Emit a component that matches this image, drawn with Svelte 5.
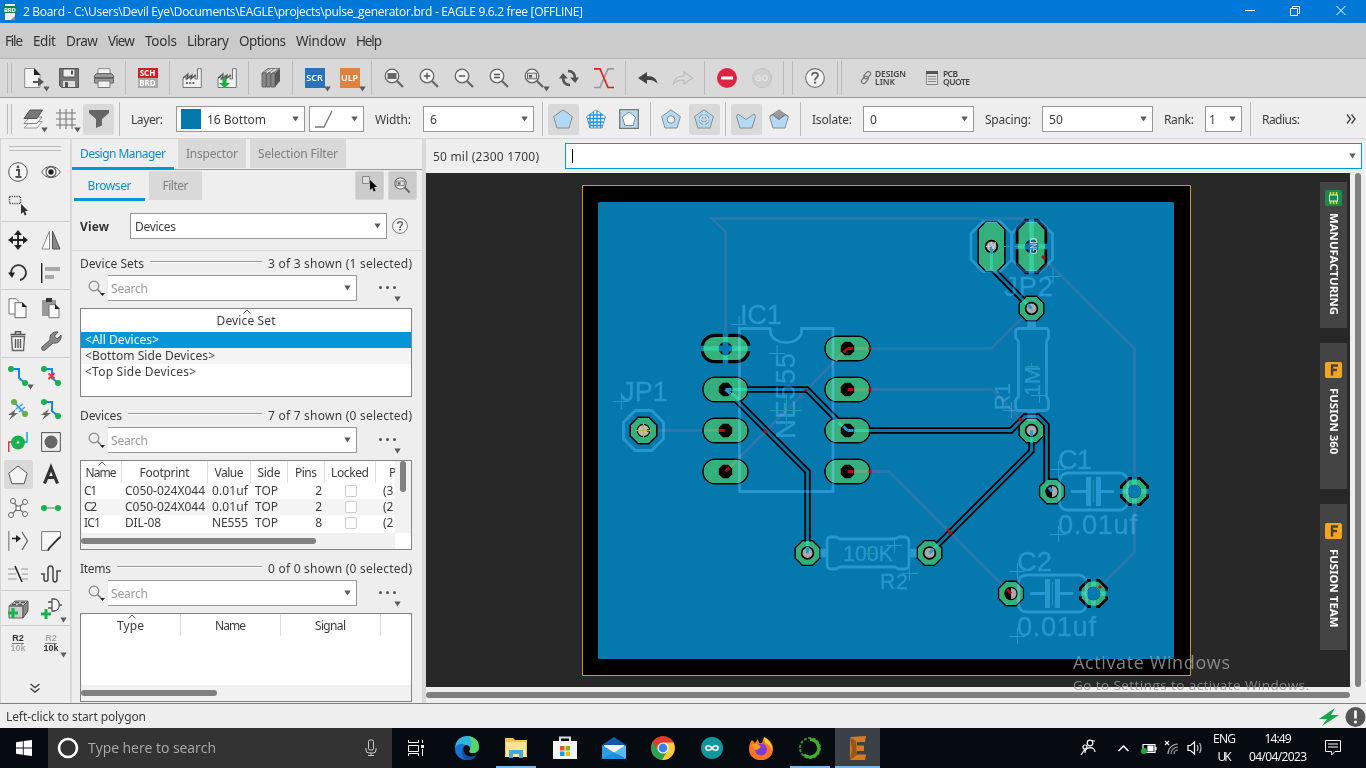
<script>
  // Spreads a label's letters so that it fills the given pixel width.
  function fit(node, width) {
    const natural = node.getBoundingClientRect().width;
    const gap = (width - natural) / Math.max(1, node.textContent.length - 1);
    node.style.letterSpacing = gap + 'px';
    node.style.marginRight = -gap + 'px';
  }

  const menus = [['File', 18], ['Edit', 23], ['Draw', 32], ['View', 27], ['Tools', 32], ['Library', 42], ['Options', 47], ['Window', 50], ['Help', 26]];

  const lens = (inner) => `<circle cx="8" cy="8" r="6.8" fill="#f2f2f2" stroke="#666" stroke-width="1.3"/><path d="M13 13l6 6" stroke="#666" stroke-width="2.2"/>${inner}`;
  const factory = (inner) => `<path d="M1 19.5V10.5l3 -2 0 3 4-4 0 3.5 5-4v4h2.5V.7h3.8v18.8z" fill="#f1f1f1" stroke="#777"/><path d="M1 10l5-4-1 5 5-4-1 4 5-4" fill="none" stroke="#555" stroke-width="1.2"/>${inner}`;
  const penta = 'M10 .8L19.4 7.6 16 19H4L.6 7.6z';
  const trace = '<path d="M3 3h8v9l6 5" fill="none" stroke="#0d8bea" stroke-width="2"/>';
  const dot = (x, y, c = '#16b34c') => `<circle cx="${x}" cy="${y}" r="3" fill="${c}"/>`;
  const bolt = '<path d="M8 10L0 16h4l-3 5 9-7H6z" fill="#666"/>';

  const icons = {
    file: '<path d="M.7.5H10l6 6v13H.7z" fill="#f5f5f5" stroke="#8b8b8b"/><path d="M10 0l6.5 7H10z" fill="#222"/><path d="M9 14h7" stroke="#555" stroke-width="2"/><path d="M14 9.5l6 4.5-6 4.5z" fill="#555"/>',
    save: '<path d="M.5.5h19v19h-17l-2-2z" fill="#777" stroke="#555"/><path d="M4 1h12v8H4z" fill="#eee" stroke="#555"/><path d="M13 2.500v4" stroke="#555" stroke-width="2"/><path d="M4 13h12v6H4z" fill="#ddd"/><path d="M6 14h3v5H6z" fill="#555"/>',
    print: '<path d="M4 .7h12V8H4z" fill="#f4f4f4" stroke="#888"/><path d="M.5 7.500l2-2h15l2 2V15H.5z" fill="#999" stroke="#666"/><path d="M1 10h18" stroke="#666" stroke-width="2"/><path d="M4 13h12v6.500H4z" fill="#eee" stroke="#777"/>',
    mill: factory('<path d="M4 15h9" stroke="#444" stroke-width="1.600" stroke-dasharray="2 1.200"/>'),
    millgo: factory('<path d="M5.500 10h4v5h3.500L7.500 20 2 15h3.500z" fill="#14b53f"/>'),
    books: '<path d="M1 5L7 .5h12L13 5z" fill="#aaa" stroke="#777"/><path d="M1 5h4v14H1zM5.700 5h3.600v14H5.700zM10 5h4v14h-4z" fill="#888" stroke="#666"/><path d="M14 5l5-4.500V13l-5 6z" fill="#555"/><path d="M5.500 5L11 1M9.700 5L15 1" stroke="#eee"/>',
    zfit: lens('<path d="M3.500 5h9v6h-9z" fill="#666"/>'),
    zin: lens('<path d="M4.700 8h6.600M8 4.700v6.600" stroke="#555" stroke-width="1.400"/>'),
    zout: lens('<path d="M4.700 8h6.600" stroke="#555" stroke-width="1.400"/>'),
    zeq: lens('<path d="M5 6.500h6M5 9.500h6" stroke="#555" stroke-width="1.300"/>'),
    zsel: lens('<path d="M3.500 5.200h9v5.600h-9z" fill="#ddd" stroke="#666"/><path d="M5 7h3v2.500H5z" fill="#555"/>'),
    refresh: '<g fill="none" stroke="#555" stroke-width="2.600"><path d="M9 3c5 0 7 3 7 8M11 17c-5 0-7-3-7-8"/></g><path d="M20 9.500l-3.800 5.500L11 9.500zM0 10.500L4 5l4.800 5.500z" fill="#555"/>',
    ratsnest: '<path d="M0 19.500h6L14 .8h6" fill="none" stroke="#999" stroke-width="1.700"/><path d="M0 .8h6l8 18.700h6" fill="none" stroke="#e02020" stroke-width="1.700"/>',
    undo: '<path d="M0 10L9 4v4c7 0 10 3 10.500 8C17 12.500 14 12 9 12v4z" fill="#444"/>',
    redo: '<path d="M19.500 10L11 4v4C4 8 1 11 .5 16 3 12.500 6 12 11 12v4z" fill="none" stroke="#bbb" stroke-width="1.200"/>',
    stop: '<circle cx="10" cy="10" r="10" fill="#de2443"/><path d="M4 10h12" stroke="#fff" stroke-width="3"/>',
    help: '<circle cx="10" cy="10" r="9.300" fill="#f5f5f5" stroke="#777" stroke-width="1.200"/><path d="M7 7.500c0-4 6-3.700 6-.3 0 2.300-3 2.200-3 5.200" fill="none" stroke="#666" stroke-width="1.900"/><path d="M9 13.700h2.200v2H9z" fill="#666"/>',
    layers: '<path d="M7 12.500h12l-5 6.500H1z" fill="#f5f5f5" stroke="#999"/><path d="M7 8h12l-5 6.500H1z" fill="#f5f5f5" stroke="#888"/><path d="M7 1h12.500L14 9.500H1z" fill="#777" stroke="#555"/>',
    grid: '<path d="M4 0v20M10 0v20M16 0v20M0 4h20M0 10h20M0 16h20" stroke="#777" stroke-width="1.100"/>',
    funnel: '<path d="M0 1h20v3l-7 6v6.500L7 19v-9L0 4z" fill="#666"/>',
    poly: `<path d="${penta}" fill="#b3daf5" stroke="#8c8c8c"/>`,
    polyhatch: `<path d="${penta}" fill="#fff" stroke="#8c8c8c"/><path d="M4 5v14M7.500 3v16M11 2v17M14.500 4v15M3 6h14M1 9.500h18M2 13h15.500M3.500 16.500h13" stroke="#1b95ee" stroke-width="1.300"/>`,
    polycut: '<path d="M.7.700h18.600v18.600H.7z" fill="#b3daf5" stroke="#777" stroke-width="1.300"/><path d="M10 3l6.500 5-2.300 8.500H5.800L3.500 8z" fill="#fff" stroke="#888"/>',
    polyhole: `<path d="${penta}" fill="#b3daf5" stroke="#8c8c8c"/><circle cx="10" cy="10.500" r="3.800" fill="#eee" stroke="#888"/>`,
    polytherm: `<path d="${penta}" fill="#b3daf5" stroke="#8c8c8c"/><circle cx="10" cy="10.500" r="5" fill="#e4e4e4" stroke="#888"/><circle cx="10" cy="10.500" r="2.600" fill="#b3daf5" stroke="#888"/><path d="M10 4.500v4M10 12.500v4M4 10.500h4M12 10.500h4" stroke="#b3daf5" stroke-width="2.200"/>`,
    polyv: '<path d="M2 5l8 5.500L18 5l1.500 2.500L16 19H4L.5 7.500z" fill="#b3daf5" stroke="#8c8c8c"/>',
    polyorph: `<path d="${penta}" fill="#b3daf5" stroke="#8c8c8c"/><path d="M10 1l7 5-7 5-7-5z" fill="#999"/><path d="M1 7l3-1.500 6 5 6-5L19 7" fill="none" stroke="#777"/>`,
    info: '<circle cx="10" cy="10" r="9.300" fill="#f5f5f5" stroke="#555"/><path d="M8 8h3v7M7.500 15h6" stroke="#555" stroke-width="2" fill="none"/><circle cx="10" cy="5" r="1.400" fill="#555"/>',
    eye: '<path d="M.7 10C5 2.500 15 2.500 19.300 10 15 17.500 5 17.500.7 10z" fill="#fafafa" stroke="#555"/><circle cx="10" cy="10" r="5" fill="none" stroke="#555" stroke-width="1.200"/><circle cx="10" cy="10" r="2.700" fill="#222"/>',
    group: '<path d="M1.500 1.500h11v7h-11z" fill="none" stroke="#555" stroke-width="1.400" stroke-dasharray="1.300 1"/><path d="M13 9v10l2.300-2 1.500 3.500 1.800-1-1.600-3.300 3-.5z" fill="#333"/>',
    move: '<path d="M10 2v16M2 10h16" stroke="#222" stroke-width="1.800"/><path d="M10 0l4 5H6zM10 20l4-5H6zM0 10l5-4v8zM20 10l-5-4v8z" fill="#222"/>',
    mirror: '<path d="M8.500 1v18H1z" fill="#fff" stroke="#888"/><path d="M11.500 1v18H19z" fill="#888" stroke="#555"/>',
    rotate: '<path d="M3 10a7.500 7.500 0 1 1 9 7" fill="none" stroke="#333" stroke-width="1.800"/><path d="M0 9.500h7l-3 5.500z" fill="#222"/>',
    align: '<path d="M.7 0v20" stroke="#222" stroke-width="1.400"/><path d="M4 4h15v4H4zM4 12h9v4H4z" fill="#aaa"/>',
    copy: '<path d="M1 .7h7l3 3V16H1z" fill="#fff" stroke="#777"/><path d="M7 4.700h7l4 4v11H7z" fill="#f8f8f8" stroke="#666"/><path d="M14 4v5h5z" fill="#222"/>',
    paste: '<path d="M1 2h14v16H1z" fill="#999"/><path d="M5 0h6v4H5z" fill="#333"/><path d="M8 6.700h6l4 4v9H8z" fill="#f8f8f8" stroke="#777"/><path d="M14 6v5h5z" fill="#222"/>',
    trash: '<path d="M3.500 5.500h13l-1 14h-11z" fill="#f5f5f5" stroke="#666" stroke-width="1.400"/><path d="M2.500 3.500h15M7.500 3V.8h5V3" fill="none" stroke="#555" stroke-width="1.600"/><path d="M7.500 8v9M10 8v9M12.500 8v9" stroke="#555" stroke-width="1.400"/>',
    wrench: '<path d="M1 16l8-7c-1-5 3-9 8-8l-3.500 4 1 2 2 .6L20 4c1 5-3 9-8 8l-8 7c-2 1.500-4.500-1-3-3z" fill="#888" stroke="#555"/>',
    route: trace + dot(3, 3) + dot(17, 17),
    ripup: trace + dot(3, 3) + dot(17, 17) + '<path d="M7.500 7.500l6 5M13.500 7l-6 6" stroke="#f23030" stroke-width="2"/>',
    airwire: '<path d="M6 3l11 12" stroke="#38a0f0" stroke-width="2"/><path d="M8 10l7-5M11 13l6-5" stroke="#38a0f0" stroke-width="1.500"/>' + dot(6, 3, '#65ae43') + dot(17, 15, '#65ae43') + bolt,
    autoroute: trace + dot(3, 3) + dot(17, 17) + bolt,
    via: '<path d="M.7 20V10H6" fill="none" stroke="#e03030" stroke-width="1.400"/><path d="M14 10h5V0" fill="none" stroke="#1596ee" stroke-width="1.400"/><circle cx="10" cy="10.500" r="7" fill="#18b34f"/><circle cx="10" cy="10.500" r="1.300" fill="#fff"/>',
    hole: '<path d="M.6.600h18.800v18.800H.6z" fill="#eee" stroke="#555"/><circle cx="10" cy="10" r="6.500" fill="#666"/>',
    pentagon: '<path d="M10 1l9.200 7.200-3 10.500H3.800L.8 8.200z" fill="#f4f4f4" stroke="#555"/>',
    letter: '<path d="M3.500 18.500L10 2.500l6.500 16M6 12.500h8" fill="none" stroke="#333" stroke-width="3.200"/>',
    signal: '<path d="M10 10L5 3M10 10l7-6M10 10l-7 7M10 10l7 6" stroke="#777" stroke-width="1.400"/><g fill="#f5f5f5" stroke="#666"><circle cx="5" cy="3" r="2.500"/><circle cx="17" cy="4" r="2.500"/><circle cx="3" cy="17" r="2.500"/><circle cx="17" cy="16" r="2.500"/><path d="M8 8h4.500v4.500H8z"/></g>',
    line: '<path d="M3 10h14" stroke="#999" stroke-width="1.500"/>' + dot(3, 10) + dot(17, 10),
    split: '<path d="M.8 0v20" stroke="#888" stroke-width="1.300"/><path d="M4 7.500h6" stroke="#222" stroke-width="1.500"/><path d="M8 4l5 3.500-5 4z" fill="#222"/><path d="M14 1l5.500 9-5.500 9" fill="none" stroke="#666" stroke-width="1.300"/>',
    miter: '<path d="M19.500 6V.6H.6v18.800H7" fill="#f7f7f7" stroke="#777"/><path d="M7 19.500l1-2L17 8l2.500-2" fill="none" stroke="#222" stroke-width="1.700"/>',
    slice: '<path d="M0 5h8M13 5h7M0 10h8M14 10h6M0 15h9M14 15h6" stroke="#999" stroke-width="1.200"/><path d="M7 2l7 16" stroke="#222" stroke-width="1.500"/>',
    meander: '<path d="M0 10h3v5c0 3 4 3 4 0V5c0-4 5-4 5 0v10c0 4 4 4 4 0V7h4" fill="none" stroke="#444" stroke-width="1.500"/>',
    part: '<path d="M1 7l6-5h13l-5 5zM1 7h14v12H1z" fill="#ccc" stroke="#666"/><path d="M15 7l5-5v10l-5 7z" fill="#888" stroke="#555"/><path d="M4 5.500h4M10 5.500h4M7 3.500h4M13 3.500h4" stroke="#555" stroke-width="1.600"/><path d="M5 9v10M0 14h10" stroke="#17b34d" stroke-width="3"/>',
    gate: '<path d="M11 0h2c7 0 7 12 0 12h-2zM7 3h4M7 9h4M18 6h3" fill="#f5f5f5" stroke="#555" stroke-width="1.300"/><path d="M5 10v10M0 15h10" stroke="#17b34d" stroke-width="3"/>'
  };

  const bar1 = [
    ['file*', 'save', 'print'], ['@sch'], ['mill', 'millgo'], ['books'], ['@SCR*', '@ULP*'],
    ['zfit', 'zin', 'zout', 'zeq', 'zsel*', 'refresh', 'ratsnest'], ['undo', 'redo'], ['stop', '@GO']
  ];
  const tools = [
    ['info', 'eye', 'group', ''], ['move', 'mirror', 'rotate', 'align'], ['copy', 'paste', 'trash', 'wrench'],
    ['route*', 'ripup', 'airwire', 'autoroute', 'via', 'hole', 'pentagon', 'letter', 'signal', 'line', 'split', 'miter', 'slice', 'meander'],
    ['part', 'gate*'], ['@val', '@val2*']
  ];
  const parts = [
    ['C1', 'C050-024X044', '0.01uf', 2, '(3'],
    ['C2', 'C050-024X044', '0.01uf', 2, '(2'],
    ['IC1', 'DIL-08', 'NE555', 8, '(2']
  ];

  const oct = (x, y, r, ry = r) => {
    const c = r * 0.59;
    return `M${x - r + c} ${y - ry}H${x + r - c}L${x + r} ${y - ry + c}V${y + ry - c}L${x + r - c} ${y + ry}H${x - r + c}L${x - r} ${y + ry - c}V${y - ry + c}z`;
  };
  const topTraces = 'M1031.500 246V218.500H712L725.500 232V348.500M847.500 348.500H991L1031.500 308.500M847.500 389.500H992L1031.500 430.500M847.500 471.500H889L1011 593.500M643.500 430.500H725.500M725.500 471.500L847.500 348.500M1031.500 246L1134.500 348.500V552L1093.500 593.500';
  const bottomTraces = 'M725.500 389.500H807L847.500 430.500H1011L1025 416.500H1038L1046.500 425V484L1052 491.500M725.500 389.500L807.500 471.500V553M991.500 246V268L1031.500 308.500M1031.500 430.500V451L929.500 553';
  const icPads = [[725.5, 389.5], [725.5, 430.5], [725.5, 471.5], [847.5, 348.5], [847.5, 389.5], [847.5, 430.5], [847.5, 471.5]];
  const roundPads = [[1031.5, 308.5], [1031.5, 430.5], [807.5, 553], [929.5, 553], [1052, 491.5], [1011, 593.5]];
  const thermals = [[1134.5, 491.5], [1093.5, 593.5]];
  const crosses = 'M731 324.500h16M739 316v16M613 401.500h16M621.500 393v16M769 353.500h16M777 345v16M1045 276.500h16M1053 268v16M1003 410.500h16M1011.500 402v16M1031 395.500h16M1039.500 387v16M1050 469.500h16M1058.500 461v16M1050 534.500h16M1058.500 526v16M1009 571.500h16M1017.500 563v16M1009 636.500h16M1017.500 628v16M902 573.500h16M909.500 565v16M886 545.500h16M894.500 537v16';
</script>

{#snippet t(text, w)}<span class="t" use:fit={w}>{text}</span>{/snippet}
{#snippet caret()}<svg class="caret" viewBox="0 0 7 6"><path d="M.3.500h6.400L3.500 5.500z" fill="#5c5c5c" /></svg>{/snippet}
{#snippet combo(w, text, tw)}
  <div class="combo" style:width="{w}px">{#if text}{@render t(text, tw)}{/if}<i></i>{@render caret()}</div>
{/snippet}
{#snippet icon(spec)}
  {@const name = spec.replace('*', '')}
  {#if name === '@sch'}
    <span class="schbrd"><b>SCH</b><b>BRD</b></span>
  {:else if name === '@SCR'}
    <span class="badge scr">SCR</span>
  {:else if name === '@ULP'}
    <span class="badge ulp">ULP</span>
  {:else if name === '@GO'}
    <span class="go">GO</span>
  {:else if name === '@val'}
    <span class="val"><b>R2</b><b class="dim">10k</b></span>
  {:else if name === '@val2'}
    <span class="val"><b class="dim">R2</b><b>10k</b></span>
  {:else if name}
    <svg class="ic" viewBox="0 0 20 20">{@html icons[name]}</svg>
  {/if}
  {#if spec.includes('*')}<span class="drop">{@render caret()}</span>{/if}
{/snippet}
{#snippet head(title, tw, count)}
  <div class="sec-head">{@render t(title, tw)}<i></i>{@render t(count, 144)}</div>
  <div class="search">
    <svg class="mag" viewBox="0 0 18 18"><circle cx="6" cy="6" r="4.800" fill="none" stroke="#888" stroke-width="1.200" /><path d="M9.500 9.500l3.500 3.500" stroke="#777" stroke-width="1.500" /><path d="M12 13h5l-2.500 3z" fill="#222" /></svg>
    <div class="combo">{@render t('Search', 37)}<i></i>{@render caret()}</div>
    <span class="more"><b></b><b></b><b></b>{@render caret()}</span>
  </div>
{/snippet}

<div class="app">
  <header class="title">
    <svg width="14" height="16" viewBox="0 0 14 16"><path d="M2 0h10v16H2z" fill="#eee" /><path d="M0 2h14v7H0z" fill="#15804a" /><path d="M8 16l4-4v4z" fill="#888" /><text x="1" y="8" font-size="6" font-weight="700" fill="#fff" textLength="12" font-family="Noto Sans">BRD</text></svg>
    {@render t('2 Board - C:\\Users\\Devil Eye\\Documents\\EAGLE\\projects\\pulse_generator.brd - EAGLE 9.6.2 free [OFFLINE]', 560)}
    <svg class="win" width="120" height="23" viewBox="0 0 120 23" fill="none" stroke="#fff"><path d="M5 10.500h10M50.500 8.500h7v7h-7zM52.500 8V6.500h7v7H58M96.500 6l9 9M105.500 6l-9 9" /></svg>
  </header>

  <nav class="menu">{#each menus as [m, w]}{@render t(m, w)}{/each}</nav>

  <div class="bar1">
    <i class="grip"></i>
    {#each bar1 as group}
      {#each group as name}<span class="cell">{@render icon(name)}</span>{/each}
      <i class="sep"></i>
    {/each}
    <i class="sep"></i>
    <span class="cell">{@render icon('help')}</span>
    <i class="grip g2"></i>
    <svg class="link" viewBox="0 0 12 14" fill="none" stroke="#777" stroke-width="1.200"><rect x="5" y="0" width="4.500" height="8" rx="2.200" transform="rotate(40 7 4)" /><rect x="2.500" y="5" width="4.500" height="8" rx="2.200" transform="rotate(40 5 9)" /></svg>
    <span class="two">{@render t('DESIGN', 31)}{@render t('LINK', 20)}</span>
    <svg class="quote" viewBox="0 0 12 14"><path d="M.5.500h11v13H.5z" fill="#ddd" stroke="#888" /><path d="M0 1.500h12" stroke="#555" stroke-width="3" /><path d="M2 5.500h8M2 8h8M2 10.500h8" stroke="#888" /></svg>
    <span class="two">{@render t('PCB', 15)}{@render t('QUOTE', 27)}</span>
  </div>

  <div class="bar2">
    <i class="grip"></i>
    <span class="cell">{@render icon('layers*')}</span>
    <span class="cell">{@render icon('grid*')}</span>
    <span class="cell on">{@render icon('funnel')}</span>
    <i class="sep"></i>
    <label class="first">{@render t('Layer:', 32)}</label>
    <div class="combo layer"><em></em>{@render t('16 Bottom', 59)}<i></i>{@render caret()}</div>
    <div class="combo bend"><svg width="20" height="18" viewBox="0 0 20 18"><path d="M0 17h9L17 1" fill="none" stroke="#777" stroke-width="1.300" /></svg><i></i>{@render caret()}</div>
    <label class="wd">{@render t('Width:', 36)}</label>{@render combo(111, '6', 7)}
    <i class="sep gap"></i>
    <span class="cell on">{@render icon('poly')}</span>
    <span class="cell">{@render icon('polyhatch')}</span>
    <span class="cell">{@render icon('polycut')}</span>
    <i class="sep"></i>
    <span class="cell">{@render icon('polyhole')}</span>
    <span class="cell on">{@render icon('polytherm')}</span>
    <i class="sep"></i>
    <span class="cell on">{@render icon('polyv')}</span>
    <span class="cell">{@render icon('polyorph')}</span>
    <i class="sep"></i>
    <label class="first">{@render t('Isolate:', 40)}</label>{@render combo(111, '0', 7)}
    <label>{@render t('Spacing:', 46)}</label>{@render combo(111, '50', 14)}
    <label>{@render t('Rank:', 30)}</label><div class="combo rank">{@render t('1', 7)}<i></i>{@render caret()}</div>
    <i class="sep gap"></i>
    <label class="first">{@render t('Radius:', 38)}</label>
    <svg class="over" viewBox="0 0 10 10" fill="none" stroke="#444" stroke-width="1.400"><path d="M1 .5L4.500 5 1 9.500M5.500.500L9 5 5.500 9.500" /></svg>
  </div>

  <main>
    <aside class="tools">
      <i class="hgrip"></i>
      {#each tools as group}
        <div class="tgroup">
          {#each group as name}<span class="tcell" class:on={name === 'pentagon'}>{@render icon(name)}</span>{/each}
        </div>
      {/each}
      <svg class="down" viewBox="0 0 10 10" fill="none" stroke="#444" stroke-width="1.400"><path d="M.5 1L5 4.500 9.500 1M.5 5.500L5 9l4.500-3.500" /></svg>
    </aside>

    <section class="panel">
      <div class="tabs">
        <span class="tab act dm">{@render t('Design Manager', 86)}</span>
        <span class="tab in">{@render t('Inspector', 52)}</span>
        <span class="tab sf">{@render t('Selection Filter', 80)}</span>
      </div>
      <div class="subtabs">
        <span class="tab act br">{@render t('Browser', 44)}</span>
        <span class="tab fl">{@render t('Filter', 26)}</span>
        <i></i>
        <span class="sq"><svg viewBox="0 0 20 20"><path d="M2.500 1.500h7v7h-7z" fill="#ddd" stroke="#888" /><path d="M10 5v10l2.300-2 1.500 3.500 1.800-1-1.600-3.300 3-.5z" fill="#000" /></svg></span>
        <span class="sq"><svg viewBox="-1 -2 24 24">{@html icons.zsel}</svg></span>
      </div>
      <div class="view"><strong>{@render t('View', 29)}</strong>{@render combo(257, 'Devices', 41)}<svg class="q" viewBox="0 0 20 20">{@html icons.help}</svg></div>

      <div class="sec">
        {@render head('Device Sets', 64, '3 of 3 shown (1 selected)')}
        <div class="table sets">
          <svg class="sort" viewBox="0 0 8 5"><path d="M.5 4.500L4 1l3.500 3.500" fill="none" stroke="#555" /></svg>
          <div class="th">{@render t('Device Set', 59)}</div>
          <div class="row sel">{@render t('<All Devices>', 74)}</div>
          <div class="row alt">{@render t('<Bottom Side Devices>', 130)}</div>
          <div class="row">{@render t('<Top Side Devices>', 111)}</div>
        </div>
      </div>

      <div class="sec">
        {@render head('Devices', 42, '7 of 7 shown (0 selected)')}
        <div class="table devs">
          <svg class="sort" viewBox="0 0 8 5"><path d="M.5 4.500L4 1l3.500 3.500" fill="none" stroke="#555" /></svg>
          <div class="cols">
            <div class="dg hd">
              <span>{@render t('Name', 31)}</span><span>{@render t('Footprint', 50)}</span><span>{@render t('Value', 29)}</span><span>{@render t('Side', 23)}</span><span>{@render t('Pins', 22)}</span><span>{@render t('Locked', 38)}</span><span class="pos">P</span>
            </div>
            {#each parts as [n, f, v, p, pos], i}
              <div class="dg" class:alt={i === 1}>
                <span>{@render t(n, n.length === 3 ? 17 : 13)}</span><span>{@render t(f, i === 2 ? 36 : 80)}</span><span class="vl">{@render t(v, 36)}</span><span class="vl">{@render t('TOP', 23)}</span><span class="pin">{p}</span><span class="lk"><b></b></span><span class="xy">{pos}</span>
              </div>
            {/each}
          </div>
          <div class="vs"><b></b></div>
          <div class="hs"><b></b></div>
        </div>
      </div>

      <div class="sec">
        {@render head('Items', 31, '0 of 0 shown (0 selected)')}
        <div class="table items">
          <svg class="sort" viewBox="0 0 8 5"><path d="M.5 4.500L4 1l3.500 3.500" fill="none" stroke="#555" /></svg>
          <div class="ig"><span>{@render t('Type', 27)}</span><span>{@render t('Name', 31)}</span><span>{@render t('Signal', 31)}</span></div>
          <div class="hs"><b></b></div>
        </div>
      </div>
    </section>

    <section class="work">
      <div class="cmd"><span class="coord">{@render t('50 mil (2300 1700)', 106)}</span><div class="input"><b></b><i></i>{@render caret()}</div></div>
      <div class="stage">
        <svg class="board" viewBox="426 173 924 514">
          <path d="M582.500 185.500h608v490h-608z" fill="#000" stroke="#c49c33" />
          <rect x="598" y="202" width="576" height="457" rx="1.500" fill="#0578ae" />
          <path d={topTraces} class="tt" />
          <g fill="#34b07c" stroke="#000" stroke-width="1.500">
            {#each icPads as [x, y]}<rect x={x - 22.5} y={y - 12.3} width="45" height="24.600" rx="12.300" />{/each}
            {#each roundPads as [x, y]}<path d={oct(x, y, 12.3)} />{/each}
            <path d={oct(643.5, 430.5, 13.3)} />
            <path d={oct(991.5, 246.5, 13.3, 25)} />
          </g>
          <path d={bottomTraces} fill="none" stroke="#000" stroke-width="6.500" />
          <path d={bottomTraces} fill="none" stroke="#0578ae" stroke-width="2.800" />
          <g stroke="#000" stroke-width="5.400" fill="none">
            <rect x="703" y="336.500" width="45" height="24" rx="12" />
            <path d={oct(1031.5, 246.5, 13, 25)} />
            {#each thermals as [x, y]}<path d={oct(x, y, 11.8)} />{/each}
          </g>
          <g stroke="#0578ae" stroke-width="5.500">
            <path d="M699 348.500h53M725.500 332v33M1012 246.500h39M1031.500 217v59" />
            {#each thermals as [x, y]}<path d="M{x - 16} {y}h32M{x} {y - 16}v32" />{/each}
          </g>
          <g fill="#34b07c">
            <rect x="703.500" y="337" width="44" height="23" rx="11.500" />
            <path d={oct(1031.5, 246.5, 13, 24.5)} />
            {#each thermals as [x, y]}<path d={oct(x, y, 11.8)} />{/each}
            {#each icPads as [x, y]}<rect x={x - 21.5} y={y - 11.5} width="43" height="23" rx="11.500" />{/each}
            {#each roundPads as [x, y]}<path d={oct(x, y, 11.5)} />{/each}
            <path d={oct(991.5, 246.5, 12.5, 24.2)} />
          </g>
          <g stroke="#35cf9f" stroke-width="4.500" fill="none">
            <path d="M703.500 348.500h44M725.500 337v23M1018 246.500h27M1031.500 222v49" />
            {#each thermals as [x, y]}<path d="M{x - 12} {y}h24M{x} {y - 12}v24" />{/each}
            <path stroke-width="3" d="M725.500 389.500h21M725.500 389.500l14 10M847.500 430.500l-9-8M847.500 430.500h21M991.500 246.500V270M1031.500 308.500l-8-8M1031.500 430.500v12M807.500 553v-12M929.500 553l8-8M1052 491.500l-5-7" />
          </g>
          <path d="M847.500 348.500h21M847.500 348.500l-12 12M847.500 389.500h21M847.500 471.500h21M704 430.500h21M725.500 471.500l11-11" stroke="#5bb07b" stroke-width="3" />
          <g fill="#000">
            {#each icPads as [x, y]}<path d={oct(x, y, 6.7)} />{/each}
            {#each [...roundPads, ...thermals, [725.5, 348.5], [1031.5, 246.5], [991.5, 246.5], [643.5, 430.500]] as [x, y]}<circle cx={x} cy={y} r="6.700" />{/each}
          </g>
          <g stroke="#0578ae" stroke-width="6">
            <path d="M719 348.500h13M725.500 342v13M1025 246.500h13M1031.500 240v13" />
            {#each thermals as [x, y]}<circle cx={x} cy={y} r="3.800" fill="#2690c4" />{/each}
          </g>
          <g fill="#aaa">
            {#each roundPads.slice(0, 4) as [x, y]}<circle cx={x} cy={y} r="5" />{/each}
            <path d="M1052 486a5.500 5.500 0 0 1 0 11zM1011 588a5.500 5.500 0 0 1 0 11z" />
            <circle cx="643.500" cy="430.500" r="5.600" fill="#c8b8b0" /><circle cx="991.500" cy="246.500" r="5" />
          </g>
          <g stroke-width="3" stroke="#249ad3" fill="none">
            <path d="M725.500 389.500l5 4M725.500 389.500h6M847.500 430.500l-4-4M847.500 430.500h6M991.500 246.500v7M1031.500 308.500l-4-4M1031.500 430.500v6M807.500 553v-6M929.500 553l4-4M1052 491.500l-3-4" />
          </g>
          <path d="M847.500 348.500h6M847.500 348.500l-4 4M847.500 389.500h6M847.500 471.500h6M719 430.500h6M725.500 471.500l4-4M647 430.500h3M1007 589.500l4 4M805 391l2-2M764 430l3 3M947 529l5 5M1042 256l3 3M1019 418l3 3M1099 588l2-2M868.500 348.500h3M868.500 389.500h3M868.500 471.500h3" stroke="#b30d10" stroke-width="2.800" fill="none" />

          <g class="silk">
            <path d="M771 328.500H739.500V491.500H833V328.500H801.500V333a15.700 11.500 0 0 1-31 0v-4.500" />
            <path d={oct(643.5, 430.5, 20)} /><path d={oct(991.5, 246.5, 20.500, 25)} /><path d={oct(1032, 246.5, 20.500, 25)} />
            <path d="M1017 328.500h29q2.500 0 2.500 3v6l-2 4v55l2 4v6q0 4-4 4h-26q-3 0-3-4v-6l3-4v-55l-3-4v-6q0-3 3.500-3z" />
            <path d="M831 537h5l4 2h55l4-2h5q5 0 5 5v22q0 5-5 5h-5l-4-2h-55l-4 2h-5q-4 0-4-5v-22q0-5 4-5z" />
            <rect x="1059.500" y="473" width="68" height="37" rx="8" /><rect x="1018.500" y="575" width="68" height="37" rx="8" />
            <path d="M1071 491.500h16M1100 491.500h14M1030 593.500h16M1059 593.500h14" />
            <path stroke-width="5" d="M1088.500 477v29M1098.500 477v29M1047.500 579v29M1057.500 579v29" />
            <path stroke-width="8.500" d="M1031.500 320v8M1031.500 411v10M819 553h7M910 553h7" />
            <path stroke-width="1" d={crosses} />
            <g class="st">
              <text x="621" y="401" textLength="47">JP1</text>
              <text x="740" y="324" textLength="42">IC1</text>
              <text x="1004" y="296" textLength="49">JP2</text>
              <text x="1058" y="469" textLength="34">C1</text>
              <text x="1058" y="534" textLength="79">0.01uf</text>
              <text x="1017" y="571" textLength="35">C2</text>
              <text x="1017" y="636" textLength="79">0.01uf</text>
              <text transform="translate(795 439) rotate(-90)" textLength="86">NE555</text>
              <g>
                <text transform="translate(1010 410) rotate(-90)" textLength="27">R1</text>
                <text transform="translate(1039.500 396) rotate(-90)" textLength="30">1M</text>
                <text x="843" y="561" textLength="50">100K</text>
                <text x="880" y="589" textLength="28">R2</text>
              </g>
            </g>
          </g>
          <path d="M770 410.500h32M786.500 394v32M1002 246.500h16M863 553.500h12M868.500 547v13M1093.500 480v23M1052.500 582v23M1026 366.500h12M1031.500 363v12" stroke="#1b9aa8" />
          <g fill="#e0dcdc" font-size="8" font-family="DejaVu Sans">
            <text transform="translate(1036.500 254.500) rotate(-90)" textLength="17">GND</text>
            <text x="985" y="249" textLength="11">+V</text>
          </g>
          <path d="M636 430.500h15M643.500 423v15" stroke="#a9b84c" />
        </svg>

        <div class="side">
          <div class="stab"><svg class="chip" viewBox="0 0 17 16"><rect width="17" height="16" rx="2" fill="#1f8a4c" /><path d="M5.500 2v12M8.500 2v12M11.500 2v12" stroke="#e8d820" stroke-width="1.500" /><rect x="4.500" y="5" width="8" height="6" fill="#138a45" stroke="#dff5df" /></svg><span class="v">MANUFACTURING</span></div>
          <div class="stab f"><svg class="chip" viewBox="0 0 17 16"><rect width="17" height="16" rx="2" fill="#f6a523" /><path d="M7 13.500V3.500h6M7 8h5" stroke="#4b4135" stroke-width="2.400" fill="none" /></svg><span class="v">FUSION 360</span></div>
          <div class="stab f"><svg class="chip" viewBox="0 0 17 16"><rect width="17" height="16" rx="2" fill="#f6a523" /><path d="M7 13.500V3.500h6M7 8h5" stroke="#4b4135" stroke-width="2.400" fill="none" /></svg><span class="v">FUSION TEAM</span></div>
        </div>
        <div class="mark"><span class="m1">{@render t('Activate Windows', 157)}</span><span class="m2">{@render t('Go to Settings to activate Windows.', 236)}</span></div>
      </div>
      <div class="bigv"><b></b></div>
      <div class="bigh"><b></b></div>
    </section>
  </main>

  <footer class="status">{@render t('Left-click to start polygon', 140)}<i></i>
    <svg width="48" height="22" viewBox="0 0 48 22"><path d="M17 2L1 13h8L4 20l17-11h-8z" fill="#12a84e" /><circle cx="37.500" cy="11" r="10" fill="#555" /><path d="M37.500 4.500v8" stroke="#fff" stroke-width="2.600" /><circle cx="37.500" cy="16" r="1.500" fill="#fff" /></svg>
  </footer>

  <div class="taskbar">
    <span class="slot start"><svg width="16" height="16" viewBox="0 0 16 16" fill="#fff"><path d="M0 2.200L6.800 1.200v6.400H0zM7.700 1.100L16 0v7.600H7.700zM0 8.400h6.800v6.400L0 13.800zM7.700 8.400H16V16l-8.300-1.100z" /></svg></span>
    <div class="find">
      <svg width="22" height="22" viewBox="0 0 22 22"><circle cx="11" cy="11" r="9" fill="none" stroke="#fff" stroke-width="2.600" /></svg>
      {@render t('Type here to search', 128)}
      <svg class="mic" width="12" height="18" viewBox="0 0 12 18" fill="none" stroke="#ccc"><rect x="3.500" y="1" width="5" height="10" rx="1.500" /><path d="M1 9v2q0 3 3 3h4q3 0 3-3V9M6 14v3M3 16.500h6" /></svg>
    </div>
    <span class="slot tv"><svg width="18" height="16" viewBox="0 0 18 16" fill="none" stroke="#fff"><path d="M1.500 0v2.500h10V0M1.500 5.500h10v6h-10zM1.500 16v-2.500h10V16M15.500 0v3M15.500 9v7" /><path d="M14 5h3v3h-3z" fill="#fff" stroke="none" /></svg></span>
    <span class="slot"><svg width="24" height="24" viewBox="0 0 24 24"><path d="M0 13C0 5 5 0 12 0s12 5 12 11c0 4-3 6-6 6-4 0-4-2-3-3 1-3-2-5-4-5-6 0-9 1-11 4z" fill="#2db5dc" /><path d="M14 .3C20 1 24 5.500 24 11c0 4-3 6-6 6-4 0-4-2-3-3 3-5 1-10-1-13.700z" fill="#56d467" /><path d="M0 13c1-5 6-6 11-4-3 1-5 8 0 12 3 2 7 2 10-1-2 3-6 4-9 4C5 24 0 19 0 13z" fill="#1673d0" /><path d="M11 9c-4 2-3 9 2 11 3 1 6 1 9-2-3 6-8 6-11 6-6-5-5-14 0-15z" fill="#0f4f9e" /></svg></span>
    <span class="slot run"><svg width="24" height="22" viewBox="0 0 24 22"><path d="M1 1h8l2 2h12v17H1z" fill="#f5c34c" /><path d="M2 5h20v15H2z" fill="#ffe394" /><path d="M5 21v-8h14v8h-4v-4H9v4z" fill="#3fa9e0" /></svg></span>
    <span class="slot"><svg width="24" height="24" viewBox="0 0 24 24"><path d="M7 6V1.500h10V6" fill="none" stroke="#ddd" stroke-width="2" /><path d="M0 5h24v18H0z" fill="#f4f4f4" /><path d="M7 10h4.500v4.500H7z" fill="#f25022" /><path d="M12.500 10H17v4.500h-4.500z" fill="#7fba00" /><path d="M7 15.500h4.500V20H7z" fill="#00a4ef" /><path d="M12.500 15.500H17V20h-4.500z" fill="#ffb900" /></svg></span>
    <span class="slot"><svg width="24" height="22" viewBox="0 0 24 22"><path d="M0 8l12-8 12 8v4H0z" fill="#0d5aa8" /><path d="M2 8h20v5L12 18 2 13z" fill="#f5f5f5" /><path d="M0 8v14h24L12 15.500z" fill="#2a9fea" /><path d="M24 8v14L12 15.500z" fill="#50bdf8" /><path d="M0 22l12-6.500L24 22z" fill="#1e8fe0" /></svg></span>
    <span class="slot"><svg width="24" height="24" viewBox="0 0 24 24"><circle cx="12" cy="12" r="12" fill="#e33b2e" /><path d="M1.600 6A12 12 0 0 0 11 24l5.500-9.500h-9z" fill="#2ba24c" /><path d="M22.400 6.500H12l4.800 8L11 24A12 12 0 0 0 22.400 6.500z" fill="#fccd38" /><circle cx="12" cy="12" r="5.600" fill="#fff" /><circle cx="12" cy="12" r="4.400" fill="#3b80ee" /></svg></span>
    <span class="slot"><svg width="22" height="22" viewBox="0 0 22 22"><circle cx="11" cy="11" r="11" fill="#10979d" /><path d="M11 11c-2-3-6-3-6 0s4 3 6 0 6-3 6 0-4 3-6 0z" fill="none" stroke="#fff" stroke-width="1.700" /></svg></span>
    <span class="slot"><svg width="24" height="24" viewBox="0 0 24 24"><path d="M3 4l3 3 3-4 1 4h3l2-6c7 3 9 8 9 12 0 15-24 15-24 0 0-4 1-6 3-9z" fill="#ff7420" /><path d="M15 1c5 3 9 8 8 14-1-4-3-7-7-8z" fill="#ffd32a" /><circle cx="12" cy="13.500" r="6" fill="#7a3cdb" /><path d="M3 8l6 0 3 3-4 3c-4 0-5-3-5-6z" fill="#ff9a20" /></svg></span>
    <span class="slot run"><svg width="24" height="24" viewBox="0 0 24 24" fill="none"><circle cx="12" cy="12" r="10" stroke="#2f9333" stroke-width="2" stroke-dasharray="3 1.500" /><path d="M12 3.500a8.700 8.700 0 1 1-6 15" stroke="#43b02a" stroke-width="3" /></svg></span>
    <span class="slot run cur"><svg width="18" height="24" viewBox="0 0 18 24"><path d="M1 1l16-1-1 6H8v3.500h7v5.500H8v3.500h9l-1 5.500H1z" fill="#d87922" /><path d="M1 1l6 4 1 14-7 5 2-11z" fill="#9a5416" /></svg></span>
    <i></i>
    <div class="tray">
      <svg width="124" height="20" viewBox="1079 738 124 20" fill="none" stroke="#fff" stroke-width="1.200"><circle cx="1089" cy="743" r="2.800" /><path d="M1084 753c0-7 10-7 10-1M1080 755l4-6M1091 741h3" /><circle cx="1084" cy="747" r="2" /><path d="M1117.500 751l5-5 5 5" stroke-width="1.500" /><path d="M1142 744.500h12v8h-12zM1155 747v3" /><path d="M1147 746h5v5h-5z" fill="#fff" /><circle cx="1143" cy="751" r="3" fill="#1dad3d" stroke="none" /><path d="M1164 741l4 4M1168 741l-4 4" /><path d="M1167 754a10 10 0 0 1 10-10M1170 754a7 7 0 0 1 7-7M1173 754a4 4 0 0 1 4-4" stroke="#aaa" /><path d="M1187 745.500h2.500l4-3.500v12l-4-3.500h-2.500z" /><path d="M1196 745q2 3 0 6M1198.500 743q3 5 0 10" stroke="#bbb" /></svg>
      <span class="lang">{@render t('ENG', 23)}{@render t('UK', 14)}</span>
      <span class="clock">{@render t('14:49', 27)}{@render t('04/04/2023', 58)}</span>
      <svg class="note" width="16" height="16" viewBox="0 0 16 16" fill="none" stroke="#fff"><path d="M.500.500h15v11H10l-3.500 3.500v-3.500h-6zM3 4h10M3 7h10" /></svg>
    </div>
  </div>
</div>

<style>
  :global(body) { margin: 0; overflow: hidden; }
  .app { width: 1366px; height: 768px; display: flex; flex-direction: column; background: #eee; color: #3c3c3c; font: 12px/16px 'Noto Sans', sans-serif; overflow: hidden; }
  .app :global(*) { box-sizing: border-box; }
  svg { flex: none; display: block; }
  i { font-style: normal; }
  .t { display: inline-block; white-space: pre; flex: none; }
  .title { height: 23px; flex: none; background: #0078d7; color: #fff; display: flex; align-items: center; padding-left: 3px; gap: 6px; font-family: 'Open Sans', sans-serif; }
  .win { margin-left: auto; margin-right: 6px; }
  .menu { height: 36px; flex: none; background: #cbcbcb; border-bottom: 1px solid #b4b4b4; display: flex; align-items: center; padding-left: 5px; gap: 10px; font-size: 13.500px; color: #333; }
  .bar1 { height: 39px; flex: none; background: #d9d9d9; border-bottom: 1px solid #999; display: flex; align-items: center; padding-left: 7px; }
  .bar2 { height: 41px; flex: none; border-bottom: 1px solid #d4d4d4; display: flex; align-items: center; padding: 2px 0 0 7px; }
  .grip { width: 5px; height: 30px; border: solid #b9b9b9; border-width: 0 1px; flex: none; margin-right: 5px; }
  .bar1 > .grip:first-child { margin-right: 4px; }
  .bar2 > .grip:first-child { margin-right: 4px; }
  .bar1 > .g2 { margin: 0 18px 0 5px; height: 34px; }
  .cell { position: relative; width: 35px; height: 31px; flex: none; display: flex; align-items: center; justify-content: center; }
  .bar2 .cell { width: 31px; margin: 0 1px; border-radius: 2px; }
  .cell.on, .tcell.on { background: #d9d9d9; }
  .ic { width: 20px; height: 20px; overflow: visible; }
  .drop { position: absolute; right: 1px; bottom: 2px; }
  .bar2 .drop { right: 0; }
  .caret { width: 7px; height: 6px; }
  .sep { width: 9px; height: 34px; flex: none; background: linear-gradient(#bbb, #bbb) 4px 0 / 1px 100% no-repeat; }
  .gap { margin-left: 4px; }
  .schbrd { width: 20px; height: 20px; background: linear-gradient(#cf2026 50%, #aaa 50%); color: #fff; display: flex; flex-direction: column; font-size: 8px; line-height: 10px; text-align: center; }
  .badge { width: 20px; height: 20px; color: #fff; font-size: 9px; line-height: 20px; text-align: center; font-weight: 600; }
  .scr { background: #2873bb; } .ulp { background: #df8240; }
  .go { width: 20px; height: 20px; border-radius: 50%; background: #cfcfcf; border: 1px solid #c2c2c2; color: #e5e5e5; font-size: 9px; line-height: 18px; text-align: center; font-weight: 600; }
  .link { width: 12px; height: 14px; }
  .quote { width: 12px; height: 14px; margin-left: 20px; }
  .two { display: flex; flex-direction: column; align-items: flex-start; font-size: 8.500px; line-height: 8px; font-weight: 600; margin-left: 3px; color: #444; }
  .quote + .two { margin-left: 5px; }
  .two .t { display: block; }
  label { margin: 0 11px; display: flex; }
  label.first { margin-left: 7px; }
  .cell + .sep + label.first { margin-left: 7px; }
  label.wd { margin-right: 12px; }
  .bar2 .t, .search .t, .view .t { padding-top: 1px; margin-bottom: -1px; }
  .combo { height: 26px; flex: none; background: #fff; border: 1px solid #979797; display: flex; align-items: center; padding: 0 5px 0 6px; }
  .combo i { flex: 1; }
  .combo.layer { width: 129px; padding-left: 4px; margin-left: 2px; }
  .layer em { width: 20px; height: 20px; background: #0578ae; margin-right: 6px; flex: none; }
  .bend { width: 55px; margin-left: 4px; padding-left: 5px; }
  .rank { width: 37px; padding-left: 3px; }
  .over { width: 10px; height: 10px; margin: 0 10px 0 auto; }

  main { height: 564px; flex: none; display: flex; }
  .tools { width: 72px; height: 564px; border-left: 1px solid #d5d5d5; border-right: 2px solid #d9d9d9; padding-top: 7px; flex: none; }
  .hgrip { display: block; width: 52px; height: 5px; border: solid #bbb; border-width: 1px 0; margin: 0 0 4px 8px; }
  .tgroup { display: grid; grid-template-columns: 33px 33px; grid-auto-rows: 33px; padding-left: .5px; border-bottom: 1px solid #ccc; margin-bottom: 1px; }
  .tgroup:nth-child(2) { margin-top: 4px; }
  .tgroup:last-of-type { border: 0; }
  .tcell { position: relative; display: flex; align-items: center; justify-content: center; width: 29px; height: 29px; margin: 2px; border-radius: 2px; }
  .tcell .drop { right: -1px; bottom: 0; }
  .val { display: flex; flex-direction: column; font: 700 9px/9px 'Liberation Sans', sans-serif; align-items: center; color: #333; }
  .val b:first-child { border-bottom: 1px solid #777; }
  .val .dim { color: #aaa; }
  .down { width: 10px; height: 10px; margin: 23px 0 0 29px; }

  .panel { width: 354px; flex: none; border-right: 4px solid #d9d9d9; }
  .tabs { height: 31px; display: flex; gap: 4px; border-bottom: 1px solid #999; }
  .tab { background: #d9d9d9; color: #808080; display: flex; align-items: center; justify-content: center; height: 29px; }
  .tab.act { background: none; color: #0a8fd0; border-bottom: 3px solid #0696d7; padding-top: 1px; }
  .tabs .act { height: 31px; }
  .dm { width: 102px; } .in { width: 68px; } .sf { width: 96px; }
  .subtabs { height: 31px; display: flex; gap: 4px; padding: 1px 5px 0 2px; }
  .subtabs > i { flex: 1; }
  .br { width: 71px; height: 30px; } .fl { width: 53px; }
  .subtabs .br { padding-top: 2px; }
  .sq { width: 29px; height: 29px; background: #cbcbcb; border: 1px solid #d5d5d5; border-radius: 2px; padding: 3px 4px 5px; }
  .sq svg { width: 20px; height: 20px; }
  .view { display: flex; align-items: center; height: 50px; padding: 1px 0 0 8px; border-bottom: 1px solid #d9d9d9; }
  .view strong { width: 50px; color: #333; display: flex; }
  .view .combo { padding-left: 4px; }
  .q { width: 16px; height: 16px; margin-left: 5px; }
  .sec { padding: 3px 10px 0 8px; }
  .sec-head { display: flex; align-items: center; height: 19px; }
  .sec-head i { flex: 1; height: 2px; border-top: 1px solid #999; border-bottom: 1px solid #fff; margin: 0 6px; transform: translateY(-2px); }
  .search { display: flex; align-items: center; margin-top: 2px; height: 26px; padding-left: 8px; }
  .mag { width: 18px; height: 18px; margin-right: 2px; margin-top: 2px; }
  .search .combo { width: 249px; border-left: 0; color: #999; padding-left: 3px; }
  .more { position: relative; display: flex; gap: 4px; margin-left: 22px; height: 4px; }
  .more b { width: 3px; height: 3px; border-radius: 2px; background: #555; }
  .more .caret { position: absolute; left: 15px; top: 10px; }
  .table { position: relative; width: 332px; background: #fff; border: 1px solid #828282; margin-top: 7px; overflow: hidden; }
  .sets { height: 89px; margin-bottom: 6px; }
  .sort { position: absolute; width: 8px; height: 5px; top: 0; left: 162px; }
  .th { height: 22px; text-align: center; padding-top: 4px; }
  .sets .sel { margin-top: 0; }
  .row { height: 16px; padding-left: 4px; line-height: 16px; }
  .sets > .th { height: 23px; }
  .alt { background: #f4f4f4; }
  .row.sel { background: #0696d7; color: #fff; }
  .devs { height: 90px; margin-bottom: 6px; }
  .devs .sort { left: 17px; }
  .cols { width: 314px; overflow: hidden; }
  .dg { display: grid; grid-template-columns: 41px 86px 43px 37px 37px 51px 40px; height: 16px; width: 340px; }
  .dg > span { padding-left: 3px; white-space: nowrap; overflow: hidden; }
  .dg > .vl { padding-left: 4px; }
  .dg.hd { height: 22px; }
  .dg.hd > span { text-align: center; padding: 4px 0 0; border-right: 1px solid #ddd; }
  .dg.hd .pos { text-align: left; padding-left: 13px; }
  .dg > .pin { text-align: right; padding-right: 3px; }
  .dg > .lk { display: flex; justify-content: center; align-items: center; padding: 0; }
  .lk b { width: 12px; height: 12px; border: 1px solid #ccc; border-radius: 2px; background: #fff; }
  .dg > .xy { padding-left: 7px; }
  .vs { position: absolute; right: 0; top: 0; width: 16px; height: 72px; background: #f2f2f2; }
  .vs b { position: absolute; left: 5px; top: 0; width: 6px; height: 31px; border-radius: 3px; background: #808080; }
  .hs { position: absolute; left: 0; bottom: 0; height: 16px; width: 314px; background: #f1f1f1; }
  .hs b { position: absolute; left: 0; top: 5px; height: 6px; width: 235px; border-radius: 3px; background: #808080; }
  .items { height: 89px; }
  .items .hs { width: 330px; } .items .hs b { width: 136px; }
  .items .sort { left: 47px; }
  .ig { display: grid; grid-template-columns: 100px 100px 100px; height: 22px; text-align: center; }
  .ig > span { padding-top: 4px; border-right: 1px solid #ddd; }

  .work { width: 940px; display: grid; grid-template-columns: 924px 16px; grid-template-rows: 34px 514px 16px; }
  .cmd { grid-column: 1 / 3; display: flex; align-items: center; padding-left: 7px; }
  .coord { display: flex; padding-top: 2px; }
  .cmd .input { margin-left: 26px; width: 797px; height: 26px; border: 1px solid #0696d7; background: #fff; display: flex; align-items: center; padding: 0 5px 0 6px; }
  .input b { width: 1px; height: 14px; background: #000; } .input i { flex: 1; }
  .stage { position: relative; background: #282828; }
  .board { position: absolute; inset: 0; width: 924px; height: 514px; }
  .tt { fill: none; stroke: #2878ae; stroke-width: 3; }
  .silk { fill: none; stroke: #223b68; stroke-width: 2.800; mix-blend-mode: screen; }
  .st { fill: #223b68; stroke-width: .3; font: 27.300px 'Liberation Sans', sans-serif; }
  .st g { font-size: 21.500px; }
  .side { position: absolute; right: 3px; top: 9px; display: flex; flex-direction: column; gap: 15.500px; }
  .stab { width: 27px; height: 145.500px; background: #444; display: flex; flex-direction: column; align-items: center; padding-top: 8px; gap: 7px; color: #fff; }
  .stab.f { padding-top: 19px; gap: 10px; }
  .chip { width: 17px; height: 16px; }
  .v { writing-mode: vertical-rl; font: 700 11.400px/14px 'Noto Sans', sans-serif; white-space: nowrap; }
  .mark { position: absolute; left: 647px; top: 477px; height: 40px; color: #999; font-family: 'Open Sans', sans-serif; display: flex; flex-direction: column; opacity: .85; z-index: 2; overflow: hidden; }
  .m1 { font-size: 18px; line-height: 25px; } .m2 { font-size: 13.500px; line-height: 20px; }
  .bigv { padding: 0 5px; } .bigv b { display: block; width: 6px; height: 514px; border-radius: 3px; background: #808080; }
  .bigh { padding-top: 5px; } .bigh b { display: block; height: 6px; width: 924px; border-radius: 3px; background: #808080; }
  .status { height: 25px; flex: none; border-top: 1px solid #808080; display: flex; align-items: center; padding: 1px 0 0 6px; }
  .status i { flex: 1; }

  .taskbar { height: 40px; flex: none; background: #060b12; color: #fff; display: flex; align-items: stretch; font-family: 'Open Sans', sans-serif; }
  .taskbar > i { flex: 1; }
  .slot { width: 40px; margin-right: 9px; display: flex; align-items: center; justify-content: center; flex: none; }
  .start { width: 48px; margin: 0; } .tv { width: 48px; margin: 0 7px 0 0; }
  .run { border-bottom: 2px solid #76b9ed; padding-top: 2px; }
  .cur { background: #3c4148; width: 45px; margin: 0; margin-left: -4px; }
  .find { width: 344px; background: #333; color: #aaa; display: flex; align-items: center; padding-left: 9px; font-size: 14px; }
  .find .t { margin-left: 9px; }
  .mic { margin: 0 15px 0 auto; }
  .tray { display: flex; align-items: center; }
  .lang, .clock { display: flex; flex-direction: column; align-items: center; font-size: 12px; line-height: 18px; }
  .lang { margin-left: 9px; } .clock { margin-left: 13px; }
  .note { margin: 0 25px 0 18px; }
</style>
